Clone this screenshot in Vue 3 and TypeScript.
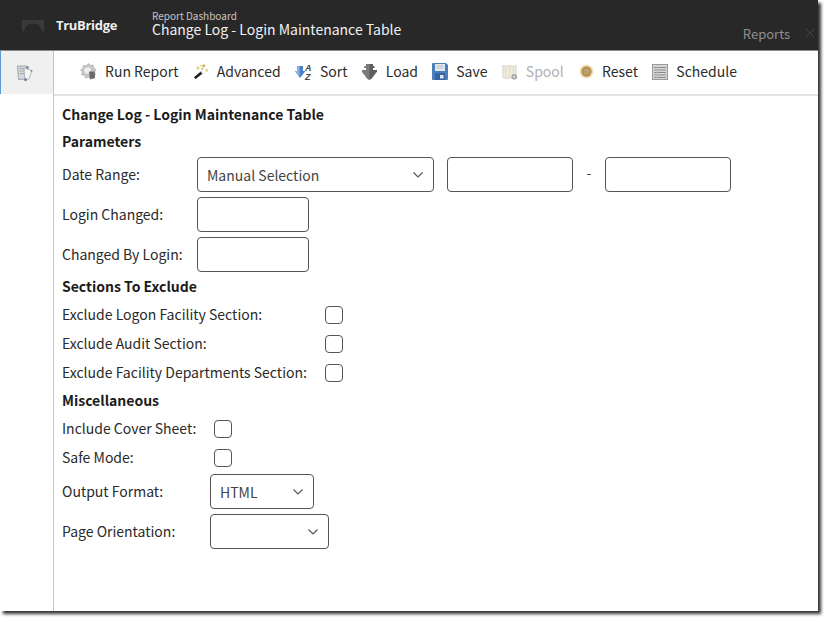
<script setup lang="ts">
const tools = [
  { id: 'run', label: 'Run Report' },
  { id: 'adv', label: 'Advanced' },
  { id: 'sort', label: 'Sort' },
  { id: 'load', label: 'Load' },
  { id: 'save', label: 'Save' },
  { id: 'spool', label: 'Spool', disabled: true },
  { id: 'reset', label: 'Reset' },
  { id: 'sched', label: 'Schedule' },
]
</script>

<template>
  <div class="page">
    <div class="window">
      <header class="top">
        <div class="brand">
          <svg class="logo" width="22" height="12" viewBox="0 0 22 12"><path d="M0 1h22v11h-2C18 6 15 4.500 11 4.500S4 6 2 12H0z" fill="#3a3a3a"/></svg>
          <span class="brand-name">TruBridge</span>
        </div>
        <div class="titles">
          <div class="sub">Report Dashboard</div>
          <div class="main">Change Log - Login Maintenance Table</div>
        </div>
        <div class="right">
          <span class="reports">Reports</span>
          <svg width="10" height="10" viewBox="0 0 10 10"><path d="M.5.500l9 9M9.500.500l-9 9" stroke="#444" stroke-width="1" fill="none"/></svg>
        </div>
      </header>
      <div class="body">
        <aside class="side">
          <div class="side-tab">
            <svg width="18" height="18" viewBox="0 0 18 18">
              <path d="M1.500 2h9v13l-8 .5z" fill="#d6d9db" stroke="#a3a6a9"/>
              <path d="M3.500 4.500h5M3.500 7h5M3.500 9.500h5" stroke="#a6aaae"/>
              <path d="M8 4l8 2.500-3 8.500-4 1.500z" fill="#f6f6f6" stroke="#a7a7b2" stroke-width=".8"/>
              <circle cx="9.500" cy="15.500" r="1.500" fill="#7a7aa6"/>
              <circle cx="11.500" cy="3.500" r="1.300" fill="#7a7aa6"/>
              <circle cx="15.500" cy="7" r=".9" fill="#8d8d8d"/>
            </svg>
          </div>
        </aside>
        <main class="content">
          <nav class="toolbar">
            <div v-for="t in tools" :key="t.id" class="tool" :class="[t.id, { off: t.disabled }]">
              <svg v-if="t.id === 'run'" width="17" height="17" viewBox="0 0 18 18">
                <path d="M9 .500l2 2 3-.5.500 3 2.500 2-1.500 2.500 1 3-3 .5-1.500 3-3-1-3 1-1.500-3-3-.5 1-3L.500 7.500l2.500-2 .5-3 3 .5z" fill="#c4c6c6" stroke="#a8aaaa" stroke-width=".6"/>
                <circle cx="8" cy="8" r="3.500" fill="#eeeeee"/>
                <path d="M9.500 9h6l.5 7-5.500 1.500z" fill="#6a6a6a"/>
              </svg>
              <svg v-else-if="t.id === 'adv'" width="16" height="17" viewBox="0 0 18 18">
                <path d="M1 15.500l8.500-7 2 2.300L3 17.500z" fill="#1e1e1e"/>
                <path d="M8.500 9.300l1.200-1 2.200 2.400-1.200 1z" fill="#e8e8e8"/>
                <circle cx="5.500" cy="5" r="1.800" fill="#e6cf87"/>
                <circle cx="12" cy="2.500" r="1.700" fill="#d9a868"/>
                <circle cx="15.500" cy="7.500" r="1.700" fill="#e6d48a"/>
                <circle cx="10.500" cy="6" r="1.300" fill="#b9c46a"/>
                <circle cx="8.500" cy="2.500" r="1" fill="#cfd99a"/>
              </svg>
              <svg v-else-if="t.id === 'sort'" width="17" height="18" viewBox="0 0 17 18">
                <path d="M2 3h6v5h2.500l-5.500 7L0 8h2z" fill="#4a82c8"/>
                <path d="M2 3h2.500v11L0 8h2z" fill="#8ab4e4"/>
                <text x="10" y="8" class="az">A</text>
                <text x="10" y="17" class="az">Z</text>
              </svg>
              <svg v-else-if="t.id === 'load'" width="15" height="17" viewBox="0 0 15 17">
                <path d="M4 1h7v2h1.500v2H11v2h4v2l-1.500 1v1L12 12v1l-1.500 1v1L7.500 17l-3-2v-1L3 13v-1l-1.500-1v-1L0 9V7h4V5H2.500V3H4z" fill="#5e5e5e"/>
                <path d="M4 1h3.500v16l-3-2v-1L3 13v-1l-1.500-1v-1L0 9V7h4V5H2.500V3H4z" fill="#7b7b7b"/>
              </svg>
              <svg v-else-if="t.id === 'save'" width="16" height="17" viewBox="0 0 16 17">
                <path d="M1 0h13l2 2v14a1 1 0 0 1-1 1H1a1 1 0 0 1-1-1V1a1 1 0 0 1 1-1z" fill="#4a7fbb"/>
                <path d="M3 1h10v7H3z" fill="#e4e8ec"/>
                <path d="M4.500 3h7M4.500 5h7" stroke="#bcc2c8"/>
                <path d="M3 10h10v7H3z" fill="#34659f"/>
                <path d="M8 12h3.500v3.500H8z" fill="#dde4ec"/>
              </svg>
              <svg v-else-if="t.id === 'spool'" width="16" height="18" viewBox="0 0 17 18">
                <path d="M1 2l4 1 3-1 4 1 3-1v9l-3 5-3-1-4 1-4-1z" fill="#eeece2" stroke="#d2d2ca"/>
                <path d="M4 3v12M8 2v12M12 3v10" stroke="#eadfbe" stroke-width="1.500"/>
                <circle cx="13" cy="14" r="3" fill="#a7a9a9"/>
                <circle cx="13" cy="14" r="1" fill="#eee"/>
              </svg>
              <svg v-else-if="t.id === 'reset'" width="15" height="15" viewBox="0 0 14 14">
                <circle cx="7" cy="7" r="6.500" fill="#efe0c4"/>
                <circle cx="7" cy="7" r="4.800" fill="#bb8f4a"/>
                <circle cx="7" cy="7" r="2.800" fill="#b3a67a"/>
              </svg>
              <svg v-else width="16" height="16" viewBox="0 0 16 16">
                <rect x=".5" y=".5" width="15" height="15" fill="#d8d8d8" stroke="#999"/>
                <path d="M2 3.500h12M2 6h12M2 8.500h12M2 11h12M2 13.500h12" stroke="#8a8a8a" stroke-width="1"/>
                <path d="M5 2.500v12" stroke="#bbb"/>
              </svg>
              <span class="tool-label">{{ t.label }}</span>
            </div>
          </nav>
          <div class="form">
            <h1>Change Log - Login Maintenance Table</h1>
            <h2>Parameters</h2>
            <div class="row r-date">
              <label class="l1">Date Range:</label>
              <div class="select w-date">
                <span>Manual Selection</span>
                <svg class="chev" width="10" height="6" viewBox="0 0 10 6"><path d="M.5.500L5 5 9.500.500" fill="none" stroke="#555" stroke-width="1.200"/></svg>
              </div>
              <div class="input w-range"></div>
              <span class="dash">-</span>
              <div class="input w-range"></div>
            </div>
            <div class="row r-in">
              <label class="l1">Login Changed:</label>
              <div class="input w-login"></div>
            </div>
            <div class="row r-in">
              <label class="l1">Changed By Login:</label>
              <div class="input w-login"></div>
            </div>
            <h2 class="exclude">Sections To Exclude</h2>
            <div class="row r-check first"><label class="l2">Exclude Logon Facility Section:</label><span class="check"></span></div>
            <div class="row r-check"><label class="l2">Exclude Audit Section:</label><span class="check"></span></div>
            <div class="row r-check"><label class="l2">Exclude Facility Departments Section:</label><span class="check"></span></div>
            <h2 class="misc">Miscellaneous</h2>
            <div class="row r-check first"><label class="l3">Include Cover Sheet:</label><span class="check"></span></div>
            <div class="row r-check"><label class="l3">Safe Mode:</label><span class="check"></span></div>
            <div class="row r-out">
              <label class="l4">Output Format:</label>
              <div class="select w-out">
                <span>HTML</span>
                <svg class="chev" width="10" height="6" viewBox="0 0 10 6"><path d="M.5.500L5 5 9.500.500" fill="none" stroke="#555" stroke-width="1.200"/></svg>
              </div>
            </div>
            <div class="row r-out second">
              <label class="l4">Page Orientation:</label>
              <div class="select w-page">
                <span></span>
                <svg class="chev" width="10" height="6" viewBox="0 0 10 6"><path d="M.5.500L5 5 9.500.500" fill="none" stroke="#555" stroke-width="1.200"/></svg>
              </div>
            </div>
          </div>
        </main>
      </div>
    </div>
  </div>
</template>

<style>
html, body { margin: 0; background: #fff; }
</style>

<style scoped>
.page { width: 827px; height: 620px; overflow: hidden; font-family: "Noto Sans CJK SC", "Noto Sans", sans-serif; color: #2a2a2a; }
.window { width: 818px; height: 611px; display: flex; flex-direction: column; background: #fff; box-shadow: 3px 3px 3px rgba(0,0,0,.8); }
.top { height: 51px; flex: none; background: #282828; display: flex; align-items: flex-start; border-bottom: 1px solid #8a8a8a; box-sizing: border-box; }
.brand { width: 152px; height: 50px; display: flex; align-items: center; flex: none; }
.logo { margin-left: 22px; }
.brand-name { margin-left: 12px; font-family: "Open Sans", sans-serif; font-weight: 700; font-size: 13px; color: #eee; letter-spacing: -.3px; }
.titles { padding-top: 10px; }
.sub { font-size: 10px; line-height: 12px; color: #c6c6c6; }
.main { font-size: 14px; line-height: 16px; color: #f2f2f2; margin-top: -1px; }
.right { margin-left: auto; display: flex; align-items: center; height: 50px; padding-top: 16px; box-sizing: border-box; }
.reports { font-size: 13px; color: #8f8f8f; margin-right: 15px; }
.right svg { margin-right: 3px; }
.body { flex: 1; display: flex; min-height: 0; }
.side { flex: none; border-right: 1px solid #c4c4c4; box-sizing: border-box; width: 54px; }
.side-tab { height: 43px; background: #f0f0f0; border-left: 1px solid #5b9bd5; display: flex; align-items: center; justify-content: center; box-sizing: border-box; padding-right: 5px; }
.content { flex: 1; display: flex; flex-direction: column; min-width: 0; }
.toolbar { height: 45px; flex: none; box-sizing: border-box; border-bottom: 2px solid #e2e2e2; display: flex; align-items: center; padding-left: 26px; padding-bottom: 2px; font-size: 14px; color: #2c2c2c; }
.tool { display: flex; align-items: center; gap: 8px; margin-right: 14.3px; }
.tool-label { padding-bottom: 1px; }
.tool.off { color: #b0b0b0; margin-right: 15.3px; }
.tool.load { gap: 9px; }
.az { font: italic 700 9px "Liberation Sans", sans-serif; fill: #444; }
.form { padding: 8px 0 0 8px; font-size: 14px; }
h1, h2 { margin: 0; font-size: 14px; font-weight: 700; color: #1c1c1c; line-height: 21px; }
h1 { margin-bottom: 6px; }
.row { display: flex; align-items: center; }
.r-date { margin-top: 5px; height: 35px; }
.r-in { margin-top: 5px; height: 35px; }
label { flex: none; padding-bottom: 2px; }
.l1 { width: 135px; }
.l2 { width: 263px; }
.l3 { width: 152px; }
.l4 { width: 148px; }
.select, .input { box-sizing: border-box; height: 35px; border: 1px solid #555; border-radius: 4px; flex: none; background: #fff; }
.select { display: flex; align-items: center; justify-content: space-between; padding: 0 10px 0 9px; color: #444; }
.w-date { width: 237px; }
.w-range { width: 126px; }
.w-date + .w-range { margin-left: 13px; }
.dash { width: 32px; text-align: center; margin-top: -5px; color: #444; }
.w-login { width: 112px; }
.exclude { margin-top: 4px; }
.r-check { height: 19px; margin-top: 10px; }
.r-check.first { margin-top: 8px; }
.check { box-sizing: border-box; width: 18px; height: 18px; border: 1px solid #555; border-radius: 4px; flex: none; }
.misc { margin-top: 8px; }
.r-out { height: 35px; margin-top: 7px; }
.r-out.second { margin-top: 5px; }
.w-out { width: 104px; }
.w-page { width: 119px; }
</style>
